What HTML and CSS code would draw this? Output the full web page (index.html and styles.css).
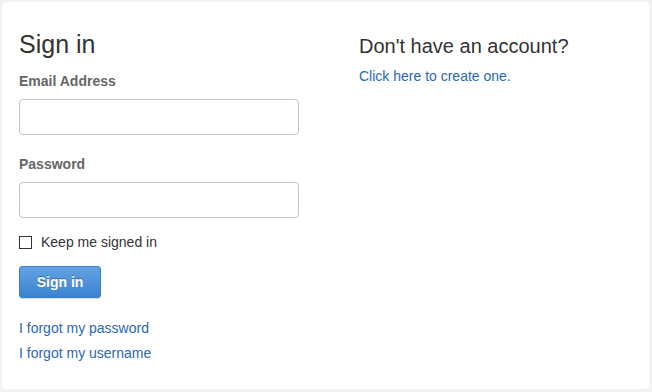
FILE: index.html
```html
<!DOCTYPE html>
<html>
<head>
<meta charset="utf-8">
<link rel="stylesheet" href="styles.css">
</head>
<body>
<div class="card">
  <div class="col col-left">
    <h1 class="title">Sign in</h1>
    <label class="label">Email Address</label>
    <input class="field" type="text">
    <label class="label label-pw">Password</label>
    <input class="field" type="password">
    <div class="remember">
      <span class="box"></span>
      <span class="remember-text">Keep me signed in</span>
    </div>
    <button class="btn">Sign in</button>
    <div class="links">
      <a class="link" href="#">I forgot my password</a>
      <a class="link" href="#">I forgot my username</a>
    </div>
  </div>
  <div class="col col-right">
    <h2 class="subtitle">Don't have an account?</h2>
    <a class="link create" href="#">Click here to create one.</a>
  </div>
</div>
</body>
</html>
```
FILE: styles.css
```css
html, body {
  margin: 0;
  padding: 0;
}
body {
  background: #f2f2f2;
  font-family: "Liberation Sans", Arial, sans-serif;
  padding: 2px 3px 3px 2px;
  height: 392px;
  box-sizing: border-box;
}
.card {
  background: #fff;
  border-radius: 4px;
  height: 100%;
  box-sizing: border-box;
  padding: 27px 17px 0 17px;
  display: flex;
  align-items: baseline;
  gap: 60px;
}
.col {
  display: flex;
  flex-direction: column;
  align-items: flex-start;
}
.col-left {
  width: 280px;
}
.title {
  margin: 0;
  font-size: 25px;
  line-height: 30px;
  font-weight: normal;
  color: #333;
}
.subtitle {
  margin: 0;
  font-size: 20px;
  line-height: 30px;
  font-weight: normal;
  color: #333;
}
.label {
  display: block;
  margin-top: 12px;
  font-size: 14px;
  line-height: 20px;
  font-weight: bold;
  color: #666;
}
.label-pw {
  margin-top: 19px;
}
.field {
  display: block;
  margin: 8px 0 0 0;
  width: 280px;
  height: 36px;
  box-sizing: border-box;
  border: 1px solid #c4c4c4;
  border-radius: 4px;
  background: #fff;
  padding: 0 8px;
  font: inherit;
}
.remember {
  margin-top: 14px;
  display: flex;
  align-items: center;
  height: 20px;
}
.box {
  width: 13px;
  height: 13px;
  box-sizing: border-box;
  border: 1px solid #333;
  background: #fff;
  margin-right: 9px;
  margin-top: 1px;
}
.remember-text {
  font-size: 14px;
  line-height: 20px;
  color: #333;
}
.btn {
  margin-top: 14px;
  width: 82px;
  height: 32px;
  border: 1px solid #3b7fc8;
  border-radius: 3px;
  background: linear-gradient(#62a2e3, #3b83d0);
  color: #fff;
  font-family: inherit;
  font-size: 14px;
  font-weight: bold;
  text-shadow: 0 -1px 0 rgba(0, 0, 0, 0.3);
  box-shadow: 0 1px 1px rgba(0, 0, 0, 0.15);
  padding: 0;
}
.links {
  margin-top: 20px;
  display: flex;
  flex-direction: column;
  gap: 5px;
}
.link {
  font-size: 14px;
  line-height: 20px;
  color: #2a68b5;
  text-decoration: none;
}
.create {
  margin-top: 5px;
}
```
